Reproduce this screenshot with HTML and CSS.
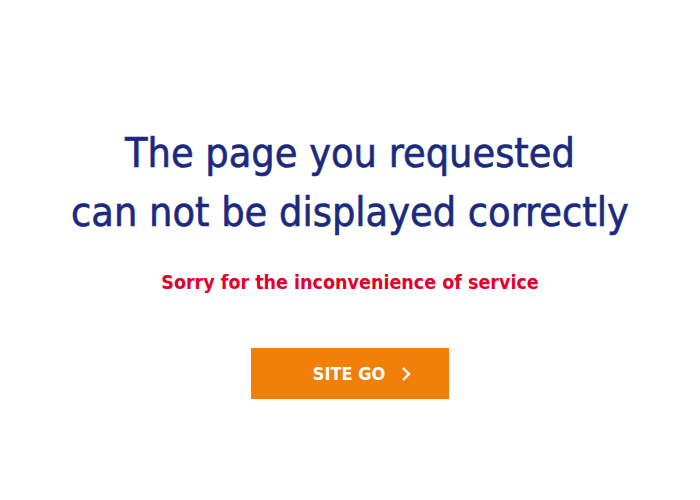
FILE: index.html
```html
<!DOCTYPE html>
<html>
<head>
<meta charset="utf-8">
<link rel="stylesheet" href="styles.css">
</head>
<body>
<main class="page">
  <h1 class="title">The page you requested<br>can not be displayed correctly</h1>
  <p class="subtitle">Sorry for the inconvenience of service</p>
  <a class="btn" href="#">SITE GO
    <svg class="chev" width="10" height="16" viewBox="0 0 10 16"><path d="M2 2 L8 8 L2 14" fill="none" stroke="#fff" stroke-width="2.4"/></svg>
  </a>
</main>
</body>
</html>
```
FILE: styles.css
```css
html, body { margin: 0; background: #fff; }
.page {
  display: flex;
  flex-direction: column;
  align-items: center;
  padding-top: 124px;
  font-family: "DejaVu Sans Condensed", "DejaVu Sans", sans-serif;
}
.title {
  margin: 0;
  font-size: 41px;
  line-height: 59px;
  font-weight: 500;
  color: #1b2a80;
  -webkit-text-stroke: 0.6px #1b2a80;
  text-align: center;
}
.subtitle {
  margin: 22px 0 0;
  font-size: 19.5px;
  line-height: 38px;
  font-weight: bold;
  color: #e4002b;
}
.btn {
  margin-top: 46px;
  width: 198px;
  height: 51px;
  background: #f0800a;
  color: #fff;
  text-decoration: none;
  display: flex;
  align-items: center;
  justify-content: center;
  gap: 16px;
  font-size: 18px;
  font-weight: bold;
  padding-left: 24px;
  box-sizing: border-box;
}
.chev { display: block; }
```
